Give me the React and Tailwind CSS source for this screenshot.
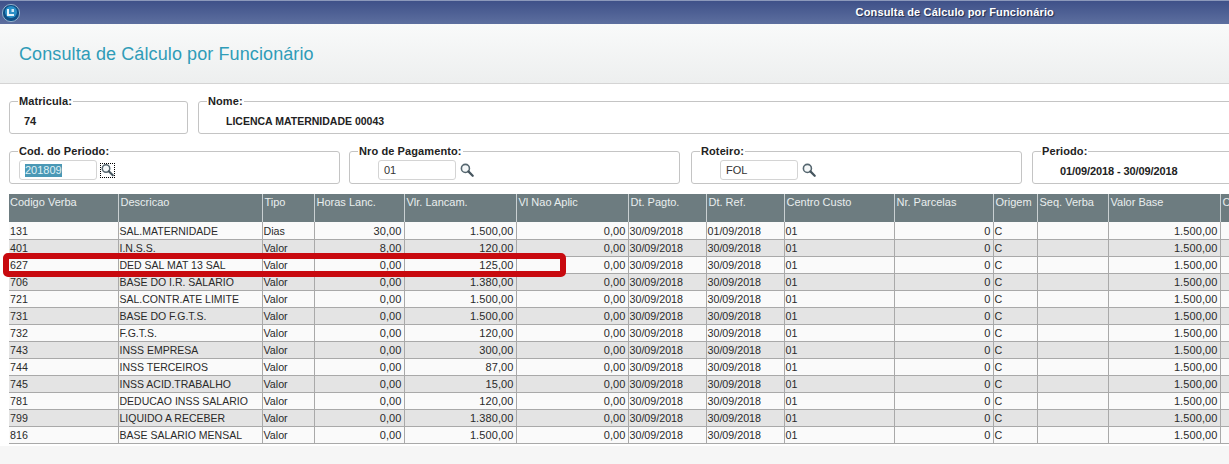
import React from 'react';

const columns = [
  { title: 'Codigo Verba', width: 109 },
  { title: 'Descricao', width: 144 },
  { title: 'Tipo', width: 52 },
  { title: 'Horas Lanc.', width: 90 },
  { title: 'Vlr. Lancam.', width: 112 },
  { title: 'Vl Nao Aplic', width: 112 },
  { title: 'Dt. Pagto.', width: 78 },
  { title: 'Dt. Ref.', width: 78 },
  { title: 'Centro Custo', width: 110 },
  { title: 'Nr. Parcelas', width: 99 },
  { title: 'Origem', width: 44 },
  { title: 'Seq. Verba', width: 71 },
  { title: 'Valor Base', width: 112 },
  { title: 'C', width: 40 },
];

const rows = [
  ['131', 'SAL.MATERNIDADE', 'Dias', '30,00', '1.500,00', '01/09/2018'],
  ['401', 'I.N.S.S.', 'Valor', '8,00', '120,00', '30/09/2018'],
  ['627', 'DED SAL MAT 13 SAL', 'Valor', '0,00', '125,00', '30/09/2018'],
  ['706', 'BASE DO I.R. SALARIO', 'Valor', '0,00', '1.380,00', '30/09/2018'],
  ['721', 'SAL.CONTR.ATE LIMITE', 'Valor', '0,00', '1.500,00', '30/09/2018'],
  ['731', 'BASE DO F.G.T.S.', 'Valor', '0,00', '1.500,00', '30/09/2018'],
  ['732', 'F.G.T.S.', 'Valor', '0,00', '120,00', '30/09/2018'],
  ['743', 'INSS EMPRESA', 'Valor', '0,00', '300,00', '30/09/2018'],
  ['744', 'INSS TERCEIROS', 'Valor', '0,00', '87,00', '30/09/2018'],
  ['745', 'INSS ACID.TRABALHO', 'Valor', '0,00', '15,00', '30/09/2018'],
  ['781', 'DEDUCAO INSS SALARIO', 'Valor', '0,00', '120,00', '30/09/2018'],
  ['799', 'LIQUIDO A RECEBER', 'Valor', '0,00', '1.380,00', '30/09/2018'],
  ['816', 'BASE SALARIO MENSAL', 'Valor', '0,00', '1.500,00', '30/09/2018'],
];

function Lens({ dotted }) {
  return (
    <span className={`flex h-[15px] w-[15px] shrink-0 items-center justify-center ${dotted ? 'border border-dotted border-black' : ''}`}>
      <svg width="14" height="14" viewBox="0 0 15 15" fill="none">
        <circle cx="5.8" cy="5.8" r="4.3" fill="#f4f7f8" stroke="#55666f" strokeWidth="1.7" />
        <path d="M9 9 L13.6 13.6" stroke="#46565f" strokeWidth="2.4" strokeLinecap="round" />
      </svg>
    </span>
  );
}

function Box({ label, className = '', children }) {
  return (
    <fieldset className={`h-[40px] shrink-0 rounded-[3px] border border-[#c4c4c4] ${className}`}>
      <legend className="ml-[8px] px-[1px] text-[11px] leading-[14px] font-bold tracking-[0.1px] text-[#222]">{label}</legend>
      {children}
    </fieldset>
  );
}

function Input({ value, selected }) {
  return (
    <span className="flex h-[20px] w-[78px] items-center rounded-[3px] border border-[#d4d4d4] bg-white pl-[5px] text-[11px] text-[#333]">
      {selected ? <span className="bg-[#4a98b5] leading-[13px] text-[#dff0f5]">{value}</span> : value}
    </span>
  );
}

function Cell({ right, narrow, children }) {
  let size = 'text-[10.7px]';
  if (right) size = 'text-[11px] tracking-[0.1px]';
  if (narrow) size = 'text-[10.5px]';
  return (
    <td className={`overflow-hidden border-r border-[#a9a9a9] p-0 pt-[1px] leading-[14px] whitespace-nowrap ${size} ${right ? 'pr-[2px] text-right' : 'pl-[1px]'}`}>
      {children}
    </td>
  );
}

export default function App() {
  return (
    <div className="relative h-[464px] w-[1229px] overflow-hidden bg-white font-['Liberation_Sans',Arial,sans-serif]">
      {/* Top bar */}
      <div className="flex h-[24px] items-center justify-between border-t border-[#8c99bb] bg-gradient-to-b from-[#3f5189] to-[#5d6f9f] pl-[2px]">
        <svg width="18" height="18" viewBox="0 0 18 18">
          <circle cx="9" cy="9" r="8.6" fill="#0f4f86" stroke="#a9c3d6" strokeWidth="0.8" />
          <circle cx="9" cy="8" r="6" fill="#2a8fc6" />
          <path d="M6 5 V11 H12" fill="none" stroke="#e6f3fb" strokeWidth="2" />
          <path d="M9.5 5 H12 V8 H9.5 Z" fill="#cfe6f4" />
        </svg>
        <span className="mr-[175px] text-[11px] font-bold tracking-[0.17px] text-white [text-shadow:1px_1px_1px_#1f2a4d]">
          Consulta de Cálculo por Funcionário
        </span>
      </div>

      {/* Title */}
      <div className="flex h-[60px] items-center border-b border-[#d4d4d4] bg-gradient-to-b from-[#f9fafa] to-[#edefef] pt-[2px] pl-[19px]">
        <h1 className="text-[18px] tracking-[0.1px] text-[#2f9cb8]">Consulta de Cálculo por Funcionário</h1>
      </div>

      {/* Filters */}
      <div className="flex gap-[10px] pt-[10px] pl-[9px]">
        <Box label="Matricula:" className="w-[179px]">
          <p className="pt-[6px] pl-[14px] text-[11px] leading-[14px] font-bold text-[#222]">74</p>
        </Box>
        <Box label="Nome:" className="w-[1100px]">
          <p className="pt-[6px] pl-[27px] text-[10.5px] leading-[14px] font-bold text-[#222]">LICENCA MATERNIDADE 00043</p>
        </Box>
      </div>
      <div className="flex pt-[10px] pl-[9px]">
        <Box label="Cod. do Periodo:" className="w-[331px]">
          <div className="flex items-center gap-[3px] pt-[2px] pl-[9px]">
            <Input value="201809" selected />
            <Lens dotted />
          </div>
        </Box>
        <Box label="Nro de Pagamento:" className="ml-[9px] w-[331px]">
          <div className="flex items-center gap-[3px] pt-[2px] pl-[28px]">
            <Input value="01" />
            <Lens />
          </div>
        </Box>
        <Box label="Roteiro:" className="ml-[11px] w-[331px]">
          <div className="flex items-center gap-[3px] pt-[2px] pl-[28px]">
            <Input value="FOL" />
            <Lens />
          </div>
        </Box>
        <Box label="Periodo:" className="ml-[10px] w-[300px]">
          <p className="pt-[6px] pl-[27px] text-[11px] leading-[14px] font-bold tracking-[-0.1px] text-[#222]">01/09/2018 - 30/09/2018</p>
        </Box>
      </div>

      {/* Grid */}
      <div className="mt-[10px] ml-[9px] w-[1400px]">
        <table className="table-fixed border-collapse text-[11px]" style={{ width: 1231 }}>
          <colgroup>
            {columns.map((c) => (
              <col key={c.title} style={{ width: c.width }} />
            ))}
          </colgroup>
          <thead>
            <tr className="h-[28px] bg-[#6d7c80]">
              {columns.map((c, i) => (
                <th key={c.title} className={`overflow-hidden border-r border-[#c9d0d2] pt-[2px] text-left align-top leading-[13px] font-normal whitespace-nowrap text-[#e9eeee] ${i === 0 ? 'pl-[1px]' : 'pl-[2px]'}`}>
                  {c.title}
                </th>
              ))}
            </tr>
          </thead>
          <tbody>
            {rows.map((r, i) => (
              <tr key={r[0]} className={`h-[17px] border-b border-[#a9a9a9] text-[#2a2a2a] ${i % 2 ? 'bg-[#e4e4e4]' : 'bg-[#fafafa]'}`}>
                <Cell>{r[0]}</Cell>
                <Cell narrow>{r[1]}</Cell>
                <Cell>{r[2]}</Cell>
                <Cell right>{r[3]}</Cell>
                <Cell right>{r[4]}</Cell>
                <Cell right>0,00</Cell>
                <Cell>30/09/2018</Cell>
                <Cell>{r[5]}</Cell>
                <Cell>01</Cell>
                <Cell right>0</Cell>
                <Cell>C</Cell>
                <Cell></Cell>
                <Cell right>1.500,00</Cell>
                <Cell></Cell>
              </tr>
            ))}
          </tbody>
        </table>
      </div>

      {/* Bottom strip */}
      <div className="absolute inset-x-0 top-[446px] h-[18px] bg-[#f6f6f6]"></div>

      {/* Red highlight drawn over the grid */}
      <div className="absolute top-[253px] left-[3px] h-[24px] w-[563px] rounded-[5px] border-[6px] border-[#c80a0f]"></div>
    </div>
  );
}
